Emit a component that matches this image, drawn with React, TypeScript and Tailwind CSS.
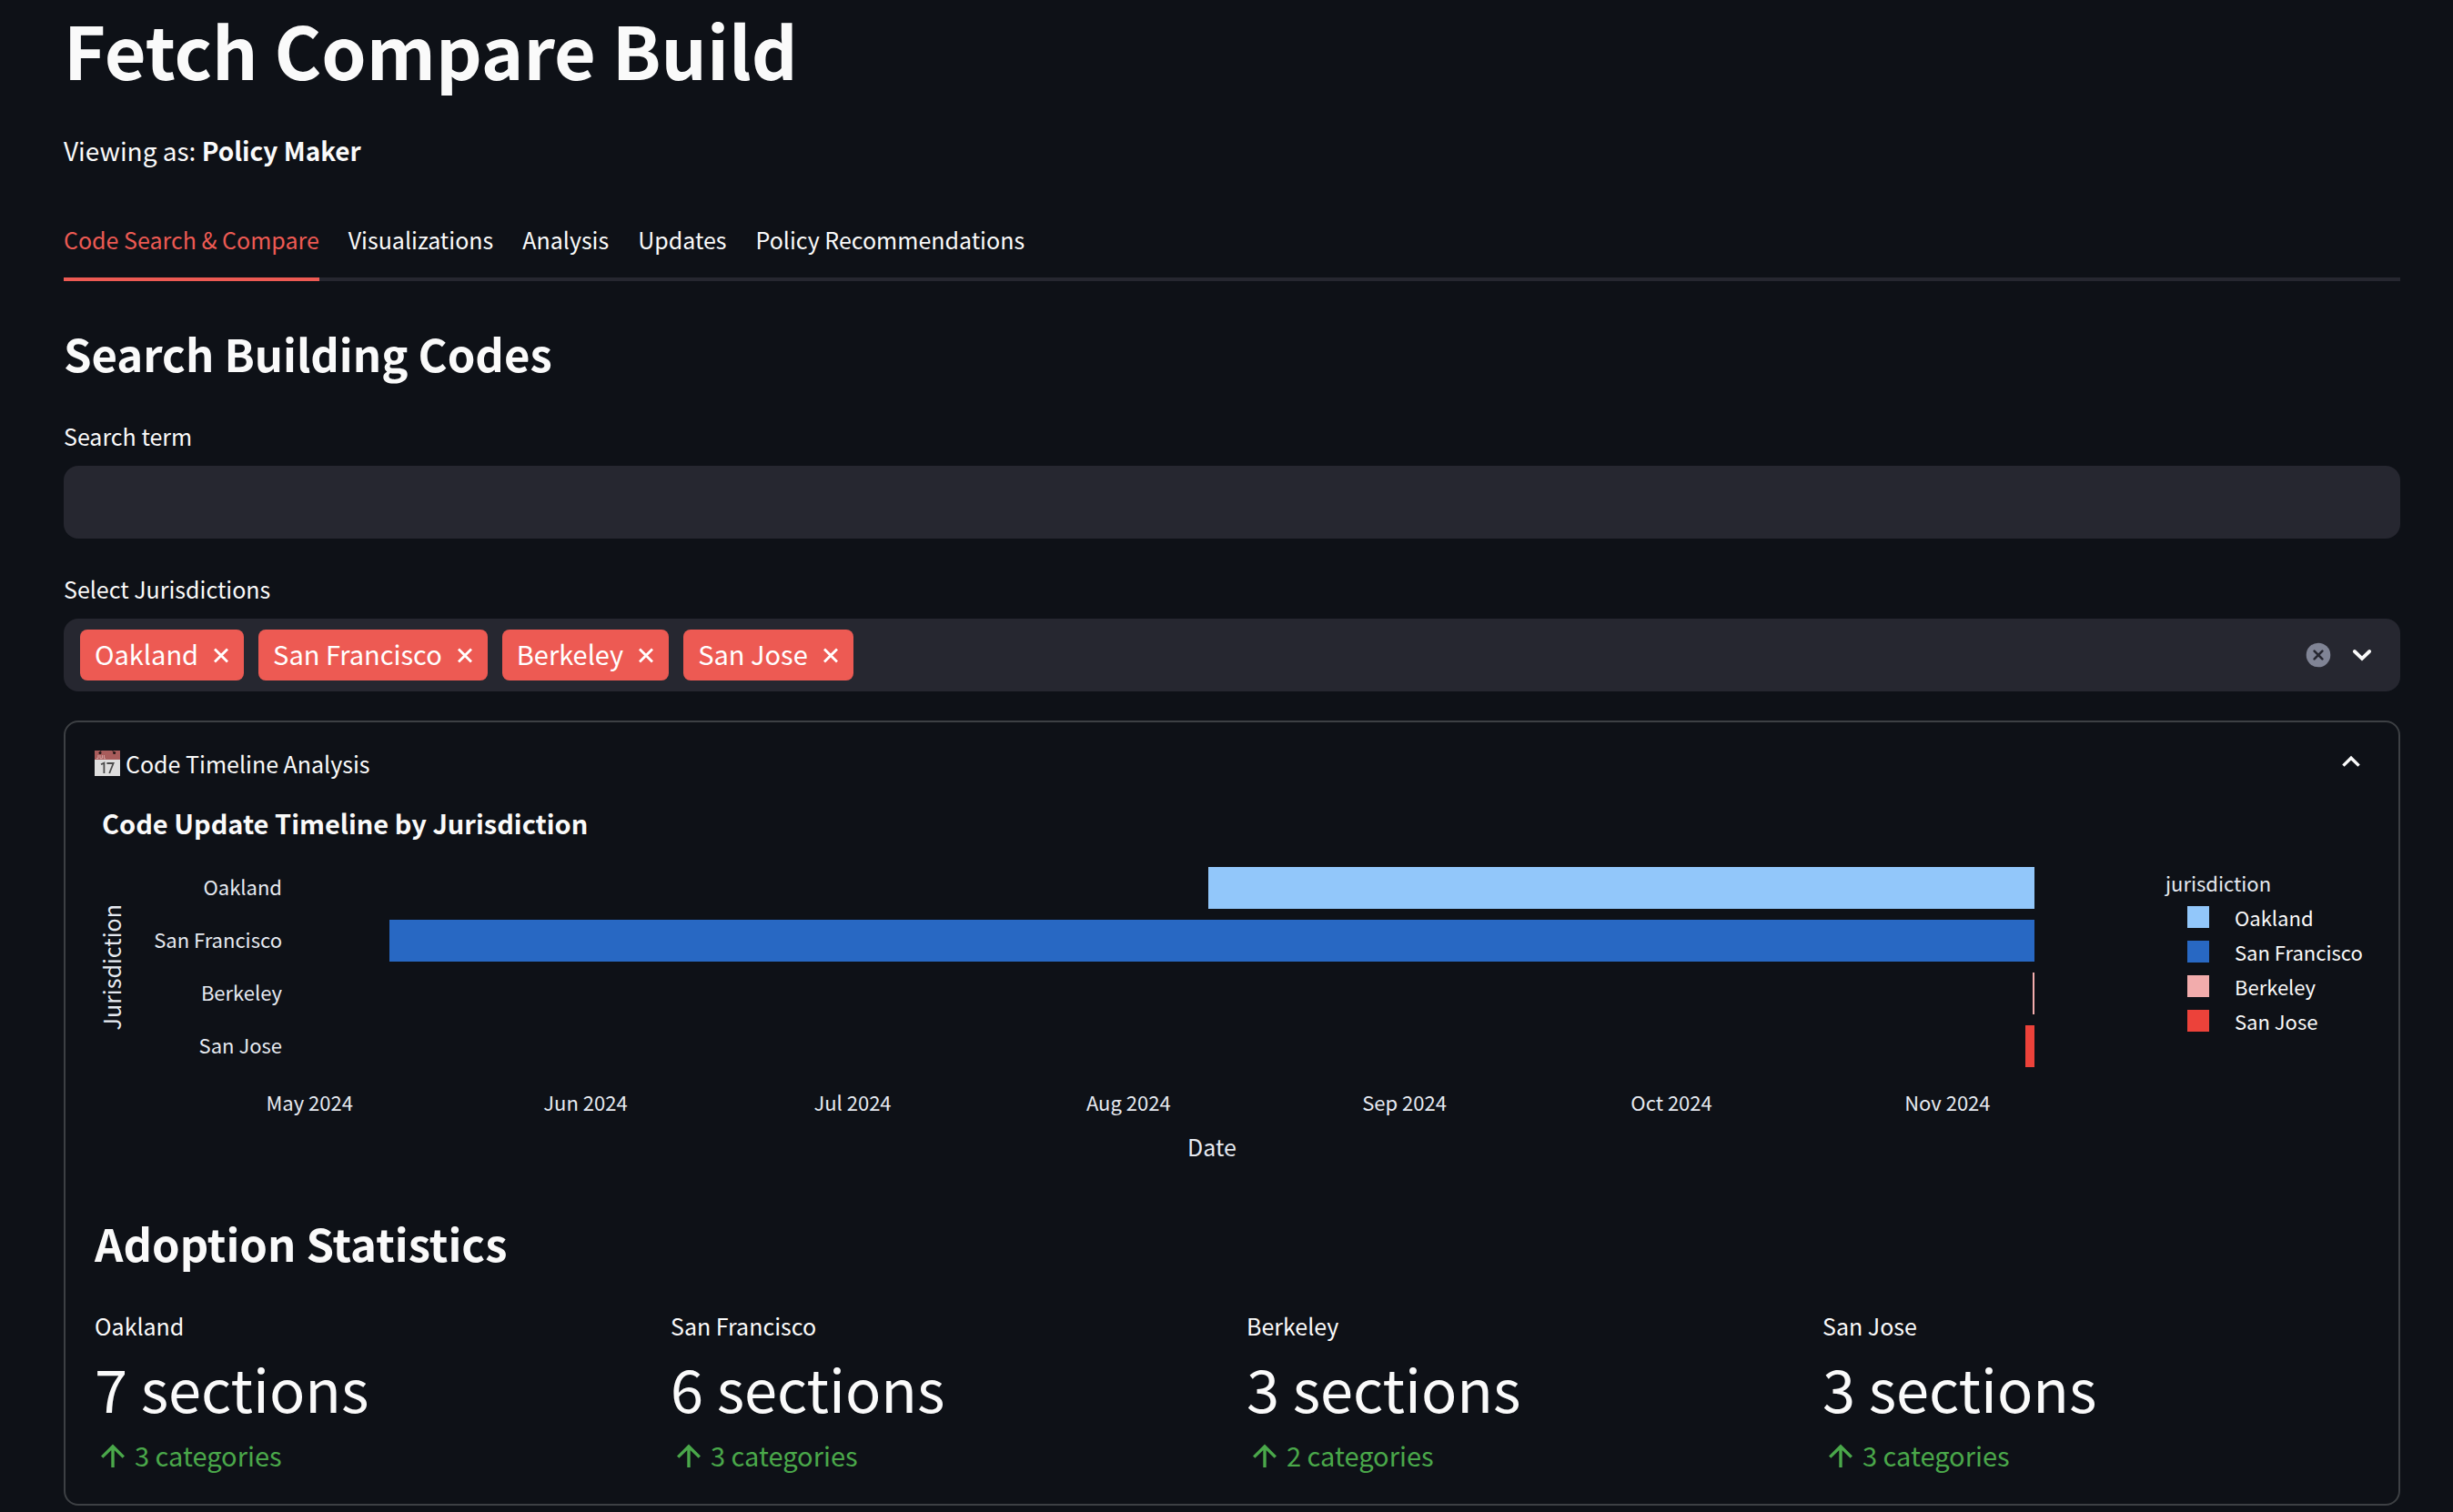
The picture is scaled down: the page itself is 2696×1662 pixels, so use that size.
import { useState } from "react";

const tabs = ["Code Search & Compare", "Visualizations", "Analysis", "Updates", "Policy Recommendations"];

const jurisdictions = ["Oakland", "San Francisco", "Berkeley", "San Jose"];

// Positions on the time axis are days counted from 1 May 2024.
const axisStart = -1.25;
const axisDays = 205.25;
const percent = (day: number) => ((day - axisStart) / axisDays) * 100;

const bars = [
  { name: "Oakland", from: 101, to: 193.8, color: "bg-[#92c7fa]" },
  { name: "San Francisco", from: 9, to: 193.8, color: "bg-[#2868c3]" },
  { name: "Berkeley", from: 193.6, to: 193.8, color: "bg-[#f2acac]" },
  { name: "San Jose", from: 192.8, to: 193.8, color: "bg-[#ec423a]" },
];

const ticks = [
  { label: "May 2024", day: 0 },
  { label: "Jun 2024", day: 31 },
  { label: "Jul 2024", day: 61 },
  { label: "Aug 2024", day: 92 },
  { label: "Sep 2024", day: 123 },
  { label: "Oct 2024", day: 153 },
  { label: "Nov 2024", day: 184 },
];

const stats = [
  { name: "Oakland", value: "7 sections", delta: "3 categories" },
  { name: "San Francisco", value: "6 sections", delta: "3 categories" },
  { name: "Berkeley", value: "3 sections", delta: "2 categories" },
  { name: "San Jose", value: "3 sections", delta: "3 categories" },
];

function CalendarIcon() {
  return (
    <svg viewBox="0 0 28 28" className="size-7 shrink-0" aria-hidden="true">
      <rect width="28" height="28" fill="#dedede" />
      <rect width="28" height="10" fill="#a85c5b" />
      <circle cx="6" cy="2.6" r="1.5" fill="#1c1212" />
      <circle cx="21.6" cy="2.6" r="1.5" fill="#1c1212" />
      <path d="M6 2.6 L7 0 M21.6 2.6 L19.6 0" stroke="#3a2424" strokeWidth="1" />
      <path d="M4 5 V8.6 H2 M6 5 V8.6 H8.4 V5 M10.4 5 V8.8 H12" fill="none" stroke="#d3a3a3" strokeWidth="1" />
      <path d="M7 15.2 L10.4 13.6 V25 M13.4 14 H20.6 L16.2 25" fill="none" stroke="#4b4b4b" strokeWidth="1.8" />
    </svg>
  );
}

function ClearIcon() {
  return (
    <svg viewBox="0 0 28 28" className="size-7" aria-hidden="true">
      <circle cx="14" cy="14" r="13.3" fill="#808495" />
      <path d="M9.6 9.6 L18.4 18.4 M18.4 9.6 L9.6 18.4" stroke="#262730" strokeWidth="2.6" strokeLinecap="round" />
    </svg>
  );
}

function Chip({ name, onRemove }: { name: string; onRemove: () => void }) {
  return (
    <span className="flex h-14 items-center rounded-lg bg-[#ed5a53] px-4 text-[29px] leading-10 text-white">
      <span className="pb-1">{name}</span>
      <button
        type="button"
        aria-label={`Remove ${name}`}
        onClick={onRemove}
        className="ml-4 flex size-[18px] items-center justify-center"
      >
        <svg viewBox="0 0 18 18" className="size-[18px]" aria-hidden="true">
          <path d="M2 2.5 L16 16.5 M16 2.5 L2 16.5" stroke="currentColor" strokeWidth="2.8" />
        </svg>
      </button>
    </span>
  );
}

function TimelineChart() {
  return (
    <figure className="mt-[22px] flex text-[22px] leading-8 text-[#e6eaf1]">
      <div className="flex h-58 w-56 shrink-0 items-center justify-between pr-[18px]">
        <span className="ml-[2px] w-8 rotate-180 text-center text-[25px] [writing-mode:vertical-rl]">Jurisdiction</span>
        <ul className="flex flex-col pb-1 text-right">
          {bars.map((bar) => (
            <li key={bar.name} className="leading-[58px] whitespace-nowrap">{bar.name}</li>
          ))}
        </ul>
      </div>
      <div className="min-w-0 flex-1">
        {bars.map((bar) => (
          <div key={bar.name} className="py-1.5">
            <div
              className={`h-[46px] ${bar.color}`}
              style={{ marginLeft: `${percent(bar.from)}%`, width: `${((bar.to - bar.from) / axisDays) * 100}%` }}
            />
          </div>
        ))}
        <div className="relative mt-4 h-8">
          {ticks.map((tick) => (
            <span
              key={tick.label}
              className="absolute -translate-x-1/2 whitespace-nowrap"
              style={{ left: `${percent(tick.day)}%` }}
            >
              {tick.label}
            </span>
          ))}
        </div>
        <p className="mt-[17px] text-center text-[25px]">Date</p>
      </div>
      <figcaption className="w-67 shrink-0 pt-[5px] pl-11">
        <p className="leading-[36px]">jurisdiction</p>
        <ul className="mt-px text-[#fafafa]">
          {bars.map((bar) => (
            <li key={bar.name} className="flex h-[38px] items-center pl-6 whitespace-nowrap">
              <span className={`mr-7 size-6 shrink-0 ${bar.color}`} />
              {bar.name}
            </li>
          ))}
        </ul>
      </figcaption>
    </figure>
  );
}

export default function App() {
  const [activeTab, setActiveTab] = useState(tabs[0]);
  const [selected, setSelected] = useState(jurisdictions);
  const [open, setOpen] = useState(true);

  return (
    <main className="min-h-screen bg-[#0e1117] pr-[58px] pl-[70px] font-['Noto_Sans_CJK_SC','Noto_Sans',sans-serif] text-[#fafafa]">
      <h1 className="text-[79px] leading-[108px] font-bold">Fetch Compare Build</h1>
      <p className="mt-[31px] text-[28px] leading-[52px]">
        Viewing as: <strong className="font-bold">Policy Maker</strong>
      </p>

      <div role="tablist" className="mt-[34px] flex gap-8 border-b-4 border-[#262730]">
        {tabs.map((tab) => (
          <button
            key={tab}
            type="button"
            role="tab"
            aria-selected={tab === activeTab}
            onClick={() => setActiveTab(tab)}
            className={
              tab === activeTab
                ? "-mb-1 border-b-4 border-[#ed5a53] pb-1 text-[25px] leading-[76px] text-[#ed5a53]"
                : "-mb-1 border-b-4 border-transparent pb-1 text-[25px] leading-[76px]"
            }
          >
            {tab}
          </button>
        ))}
      </div>

      <h2 className="mt-[45px] text-[49px] leading-[68px] font-bold">Search Building Codes</h2>

      <label htmlFor="search-term" className="mt-9 mb-3 block text-[25px] leading-[42px]">
        Search term
      </label>
      <input
        id="search-term"
        type="text"
        className="block h-20 w-full rounded-2xl bg-[#262730] px-6 text-[29px] outline-none"
      />

      <label htmlFor="jurisdictions" className="mt-[34px] mb-3 block text-[25px] leading-[42px]">
        Select Jurisdictions
      </label>
      <div className="flex h-20 items-center gap-4 rounded-2xl bg-[#262730] pr-7 pl-[18px]">
        {selected.map((name) => (
          <Chip key={name} name={name} onRemove={() => setSelected(selected.filter((item) => item !== name))} />
        ))}
        <input id="jurisdictions" type="text" className="h-14 min-w-0 flex-1 bg-transparent text-[29px] outline-none" />
        <button type="button" aria-label="Clear all" onClick={() => setSelected([])}>
          <ClearIcon />
        </button>
        <button type="button" aria-label="Open list" className="ml-1">
          <svg viewBox="0 0 28 28" className="size-7" aria-hidden="true">
            <path d="M5.8 10 L14 17.8 L22.2 10" fill="none" stroke="currentColor" strokeWidth="3.8" strokeLinecap="round" />
          </svg>
        </button>
      </div>

      <section className="mt-8 rounded-2xl border-2 border-[#3d4044] px-8 pt-6 pb-[34px]">
        <button
          type="button"
          aria-expanded={open}
          onClick={() => setOpen(!open)}
          className="flex w-full items-center gap-1.5 pr-1.5 text-[25px] leading-[42px]"
        >
          <CalendarIcon />
          <span>Code Timeline Analysis</span>
          <svg viewBox="0 0 28 28" className="ml-auto size-7" aria-hidden="true">
            <path d="M5.4 16.6 L14 8.2 L22.6 16.6" fill="none" stroke="currentColor" strokeWidth="3.4" />
          </svg>
        </button>

        {open && (
          <>
            <h3 className="mt-[23px] pl-2 text-[29px] leading-[42px] font-bold">Code Update Timeline by Jurisdiction</h3>
            <TimelineChart />

            <h2 className="mt-14 text-[49px] leading-[68px] font-bold">Adoption Statistics</h2>
            <dl className="mt-9 grid grid-cols-4 gap-8">
              {stats.map((stat) => (
                <div key={stat.name}>
                  <dt className="text-[25px] leading-[42px]">{stat.name}</dt>
                  <dd className="mt-[5px] text-[65px] leading-[84px]">{stat.value}</dd>
                  <dd className="mt-3 flex items-center gap-2.5 pl-1.5 text-[29px] leading-10 text-[#4aa84a]">
                    <svg viewBox="0 0 28 28" className="size-7" aria-hidden="true">
                      <path d="M14 28 V5 M2.2 16.6 L14 5 L25.8 16.6" fill="none" stroke="currentColor" strokeWidth="3.4" />
                    </svg>
                    {stat.delta}
                  </dd>
                </div>
              ))}
            </dl>
          </>
        )}
      </section>
    </main>
  );
}
